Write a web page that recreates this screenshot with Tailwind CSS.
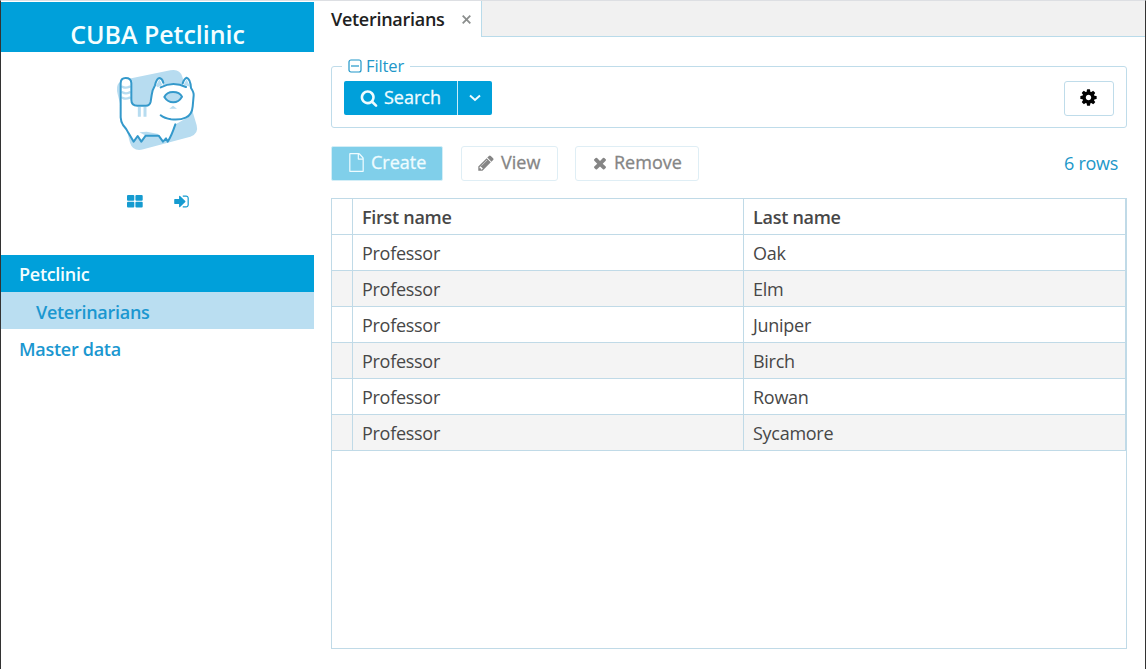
<!DOCTYPE html>
<html lang="en">
<head>
<meta charset="utf-8">
<title>CUBA Petclinic</title>
<script src="https://cdn.jsdelivr.net/npm/@tailwindcss/browser@4"></script>
</head>
<body class="h-[669px] w-[1146px] overflow-hidden bg-white font-['Open_Sans','Noto_Sans',sans-serif] text-[18px] tracking-[-0.28px] text-[#474747]">
<div class="flex h-full border-x border-t border-x-[#333] border-t-[#dddfe3]">
  <aside class="mt-px w-[313px] shrink-0 font-semibold text-[#1b97d0]">
    <h1 class="flex h-[50px] items-end justify-center bg-[#00a0da] text-[25px] leading-[35px] font-semibold tracking-[-0.05px] text-[#f4feff]">CUBA Petclinic</h1>
    <div class="flex h-[108px] justify-center pt-2 pl-[5px]">
      <svg class="h-[100px] w-[120px]" viewBox="0 0 360 300" fill="none" stroke="#3499cb" stroke-width="6" stroke-linecap="round" stroke-linejoin="round">
        <path fill="#b7dcf0" stroke="none" d="M72 59L211 31Q239 25 247 50L290 196Q297 222 271 230L130 268Q99 276 90 248L53 103Q47 78 57 68Z"/>
        <path fill="#fff" stroke="none" d="M94 69Q93 54 77 54Q62 54 62 70V172Q63 187 69 195Q80 207 86 220L101 245L113 228L124 245L137 227H176L189 245L198 235L203 245Q214 229 226 193Q248 181 260 174Q278 164 278 140L281 106Q282 98 273 84Q271 56 260 53Q253 55 248 75Q218 67 190 77Q186 57 178 53Q170 56 165 76L158 91Q155 103 152 125Q149 137 138 137H112Q94 137 94 119Z"/>
        <path stroke="#b7dcf0" stroke-width="7" d="M67 80Q77 86 89 80M67 97Q77 103 89 97M67 113Q77 119 89 113"/>
        <path stroke="#b7dcf0" stroke-width="9" stroke-linecap="butt" d="M118 141V170M135 141V170"/>
        <path fill="#b7dcf0" stroke="none" d="M168 77L178 58L187 75L173 82ZM251 74L260 58L270 80ZM118 217L140 215L175 222L172 226L135 226ZM208 146L219 137L231 146Z"/>
        <path d="M226 193Q214 229 203 245L198 235L189 245L176 227H137L124 245L113 228L101 245L86 220Q80 207 69 195Q63 187 62 172V70Q62 54 77 54Q93 54 94 69V119Q94 137 112 137H138Q149 137 152 125Q155 103 158 91L165 76Q170 54 179 54Q187 56 190 68M248 70Q253 55 260 53Q271 56 273 84Q282 98 281 106L278 140Q276 165 257 173Q240 181 213 178Q193 175 182 166M182 82Q219 62 258 81"/>
        <path fill="#b7dcf0" d="M193 111Q200 96 219 96Q239 96 246 110Q236 127 220 127Q203 127 193 111Z"/>
      </svg>
    </div>
    <div class="flex h-[95px] items-start justify-center gap-[30px] pt-[33px] pl-px">
      <svg class="mt-px size-4" viewBox="0 0 16 16" fill="#159bd0"><rect y="1" width="7.3" height="5.7" rx="1"/><rect x="8.4" y="1" width="7.3" height="5.7" rx="1"/><rect y="7.7" width="7.3" height="5.7" rx="1"/><rect x="8.4" y="7.7" width="7.3" height="5.7" rx="1"/></svg>
      <svg class="size-[17px]" viewBox="0 0 1792 1792" fill="#159bd0"><path d="M1312 896q0 26-19 45l-544 544q-19 19-45 19t-45-19-19-45v-288h-448q-26 0-45-19t-19-45v-384q0-26 19-45t45-19h448v-288q0-26 19-45t45-19 45 19l544 544q19 19 19 45zm352-352v704q0 119-84.5 203.5t-203.5 84.5h-320q-13 0-22.5-9.5t-9.5-22.5q0-4-1-20t-.5-26.5 3-23.5 10-19.5 20.5-6.5h320q66 0 113-47t47-113v-704q0-66-47-113t-113-47h-312l-11.5-1-11.5-3-8-5.5-7-9-2-13.5q0-4-1-20t-.5-26.5 3-23.5 10-19.5 20.5-6.5h320q119 0 203.5 84.5t84.5 203.5z"/></svg>
    </div>
    <nav>
      <div class="flex h-[37px] items-center bg-[#00a0da] pt-0.5 pl-[18px] text-[#f4feff]">Petclinic</div>
      <div class="flex h-[37px] items-center bg-[#badef1] pt-1 pl-[35px]">Veterinarians</div>
      <div class="flex h-[37px] items-center pt-1 pl-[18px]">Master data</div>
    </nav>
  </aside>
  <main class="flex min-w-0 grow flex-col">
    <div class="flex h-9 shrink-0">
      <div class="flex w-[167px] items-center pl-[17px] font-semibold text-[#212121]"><span class="w-[131px]">Veterinarians</span>
        <svg class="size-[9px]" viewBox="0 0 9 9" stroke="#8b8e8d" stroke-width="1.8"><path d="M.7.7L8.3 8.3M8.3.7L.7 8.3"/></svg></div>
      <div class="grow border-b border-l border-[#b9dbea] bg-[#f1f1f1]"></div>
    </div>
    <div class="flex grow flex-col pt-[18px] pr-[18px] pb-5 pl-[17px]">
      <fieldset class="h-[73px] shrink-0 rounded-[3px] border border-[#bfdcea]">
        <legend class="ml-[10px] flex h-[22px] items-center gap-1 px-[6px] text-[16.5px] leading-[22px] tracking-[-0.1px] text-[#2197c9]">
          <svg class="size-[14px]" viewBox="0 0 14 14" fill="none" stroke="#2197c9" stroke-width="1.2"><rect x="1" y="1" width="12" height="12" rx="2"/><path d="M3 7H11"/></svg>Filter</legend>
        <div class="flex justify-between pt-1 pr-3 pl-3">
          <div class="flex h-[34px] text-[#effcff]">
            <div class="flex w-[114px] items-center gap-[6px] rounded-l-xs border-r border-[#c8edf9] bg-[#00a0da] pb-0.5 pl-4 tracking-normal [-webkit-text-stroke:0.3px]">
              <svg class="mt-0.5 size-[18px]" viewBox="0 0 1792 1792" fill="currentColor"><path d="M1216 832q0-185-131.5-316.5t-316.5-131.5-316.5 131.5-131.5 316.5 131.5 316.5 316.5 131.5 316.5-131.5 131.5-316.5zm512 832q0 52-38 90t-90 38q-54 0-90-38l-343-342q-179 124-399 124-143 0-273.5-55.5t-225-150-150-225-55.5-273.5 55.5-273.5 150-225 225-150 273.5-55.5 273.5 55.5 225 150 150 225 55.5 273.5q0 220-124 399l343 343q37 37 37 90z"/></svg>Search</div>
            <div class="flex w-[34px] items-center justify-center rounded-r-xs bg-[#00a0da]"><svg class="h-2 w-3" viewBox="0 0 12 8" fill="none" stroke="currentColor" stroke-width="2"><path d="M1 1.5L6 6L11 1.5"/></svg></div>
          </div>
          <div class="flex h-[35px] w-[50px] items-center justify-center rounded-[3px] border border-[#bfdcea]">
            <svg class="-mt-0.5 mr-px size-[19px]" viewBox="0 0 1792 1792"><path d="M1152 896q0-106-75-181t-181-75-181 75-75 181 75 181 181 75 181-75 75-181zm512-109v222q0 12-8 23t-20 13l-185 28q-19 54-39 91 35 50 107 138 10 12 10 25t-9 23q-27 37-99 108t-94 71q-12 0-26-9l-138-108q-44 23-91 38-16 136-29 186-7 28-36 28h-222q-14 0-24.5-8.5t-11.5-21.5l-28-184q-49-16-90-37l-141 107q-10 9-25 9-14 0-25-11-126-114-165-168-7-10-7-23 0-12 8-23 15-21 51-66.5t54-70.5q-27-50-41-99l-183-27q-13-2-21-12.5t-8-23.5v-222q0-12 8-23t19-13l186-28q14-46 39-92-40-57-107-138-10-12-10-24 0-10 9-23 26-36 98.5-107.5t94.5-71.5q13 0 26 10l138 107q44-23 91-38 16-136 29-186 7-28 36-28h222q14 0 24.5 8.5t11.5 21.5l28 184q49 16 90 37l142-107q9-9 24-9 13 0 25 10 129 119 165 170 7 8 7 22 0 12-8 23-15 21-51 66.5t-54 70.5q26 50 41 98l183 28q13 2 21 12.5t8 23.5z"/></svg>
          </div>
        </div>
      </fieldset>
      <div class="mt-[18px] flex h-[35px] shrink-0 items-stretch text-[#858585] tracking-normal [-webkit-text-stroke:0.3px]">
        <div class="mr-[18px] flex w-[112px] items-center gap-[6px] rounded-xs border border-[#d3eef7] bg-[#80cfea] pb-0.5 pl-4 text-[#effcff]">
          <svg class="h-[19px] w-[17px]" viewBox="0 0 1792 1792" fill="currentColor" preserveAspectRatio="none"><path d="M1596 380q28 28 48 76t20 88v1152q0 40-28 68t-68 28h-1344q-40 0-68-28t-28-68v-1600q0-40 28-68t68-28h896q40 0 88 20t76 48zm-444-244v376h376q-10-29-22-41l-313-313q-12-12-41-22zm384 1528v-1024h-416q-40 0-68-28t-28-68v-416h-768v1536h1280z"/></svg>Create</div>
        <div class="mr-[17px] flex w-[97px] items-center gap-[6px] rounded-[3px] border border-[#dfeef5] pb-0.5 pl-[15px]">
          <svg class="size-[18px]" viewBox="0 0 1792 1792" fill="currentColor"><path d="M491 1536l91-91-235-235-91 91v107h128v128h107zm523-928q0-22-22-22-10 0-17 7l-542 542q-7 7-7 17 0 22 22 22 10 0 17-7l542-542q7-7 7-17zm-54-192l416 416-832 832h-416v-416zm683 96q0 53-37 90l-166 166-416-416 166-165q36-38 90-38 53 0 91 38l235 234q37 39 37 91z"/></svg>View</div>
        <div class="flex w-[124px] items-center gap-[5px] rounded-[3px] border border-[#dfeef5] pb-0.5 pl-[15px]">
          <svg class="size-[18px]" viewBox="0 0 1792 1792" fill="currentColor"><path d="M1490 1322q0 40-28 68l-136 136q-28 28-68 28t-68-28l-294-294-294 294q-28 28-68 28t-68-28l-136-136q-28-28-28-68t28-68l294-294-294-294q-28-28-28-68t28-68l136-136q28-28 68-28t68 28l294 294 294-294q28-28 68-28t68 28l136 136q28 28 28 68t-28 68l-294 294 294 294q28 28 28 68z"/></svg>Remove</div>
        <div class="ml-auto flex items-center pr-[9px] tracking-[-0.3px] text-[#2197c9] [-webkit-text-stroke:0px]">6 rows</div>
      </div>
      <div class="mt-[17px] grow border border-[#c0dae7]">
        <div class="grid grid-cols-[21px_391px_1fr] border-r border-[#c0dae7] [&>*]:flex [&>*]:h-9 [&>*]:items-center [&>*]:border-b [&>*]:border-[#c0dae7] [&>*]:pt-px [&>*]:pl-[9px] [&>*:not(:nth-child(3n))]:border-r [&>*:nth-child(6n+7)]:bg-[#f4f4f4] [&>*:nth-child(6n+8)]:bg-[#f4f4f4] [&>*:nth-child(6n+9)]:bg-[#f4f4f4]">
          <div></div><div class="font-semibold">First name</div><div class="font-semibold">Last name</div>
          <div></div><div>Professor</div><div>Oak</div>
          <div></div><div>Professor</div><div>Elm</div>
          <div></div><div>Professor</div><div>Juniper</div>
          <div></div><div>Professor</div><div>Birch</div>
          <div></div><div>Professor</div><div>Rowan</div>
          <div></div><div>Professor</div><div>Sycamore</div>
        </div>
      </div>
    </div>
  </main>
</div>
</body>
</html>
